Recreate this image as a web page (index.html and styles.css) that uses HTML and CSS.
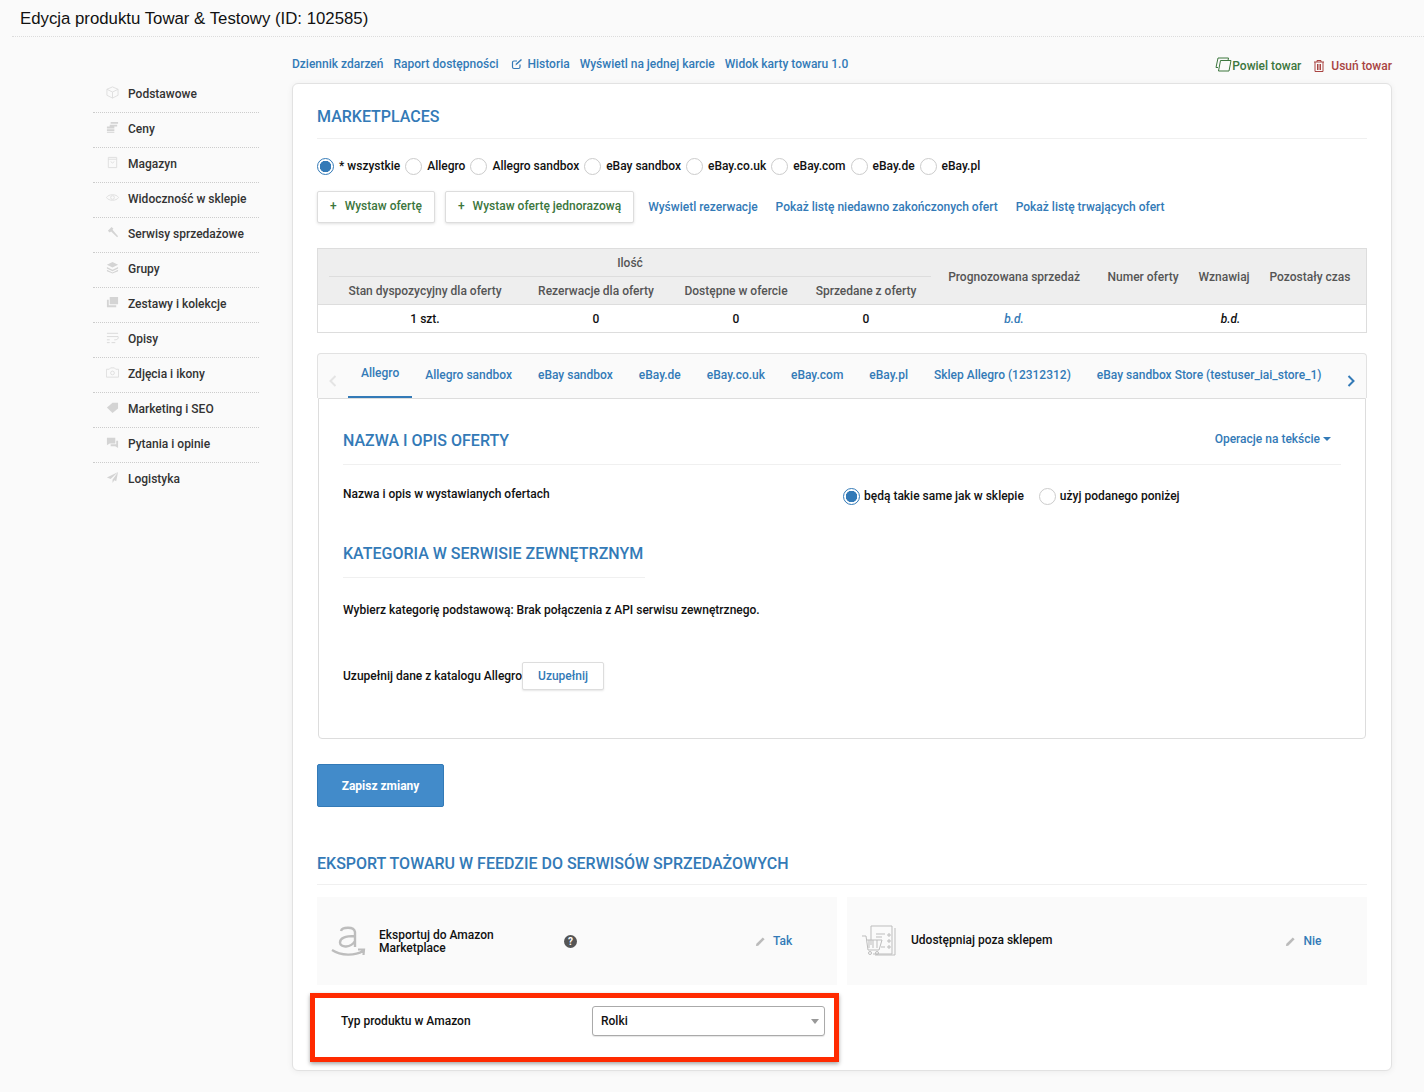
FILE: index.html
```html
<!DOCTYPE html>
<html lang="pl">
<head>
    <meta charset="UTF-8">
    <title>Edycja produktu</title>
    <link rel="stylesheet" href="styles.css">
</head>
<body>
    <h1 class="page-title">Edycja produktu Towar &amp; Testowy (ID: 102585)</h1>

    <div class="layout">
        <ul class="side-menu">
            <li><svg class="side-icon" viewBox="0 0 14 14"><path d="M7 1 13 3.500V10L7 13 1 10V3.500ZM1 3.500 7 6.500 13 3.500M7 6.500V13" fill="none" stroke="#ddd"/></svg>Podstawowe</li>
            <li><svg class="side-icon" viewBox="0 0 14 14"><path d="M5 1h8v2H5ZM4 4h8v2H4ZM1 6h8v2H1ZM1 9h8v2H1ZM1 12h8v1H1Z" fill="#d4d4d4"/></svg>Ceny</li>
            <li><svg class="side-icon" viewBox="0 0 14 14"><path d="M2.500 1.500h9v11h-9ZM2.500 3.500h9M5 6l2 1.500L9 6" fill="none" stroke="#ddd"/></svg>Magazyn</li>
            <li><svg class="side-icon" viewBox="0 0 14 14"><path d="M0.500 7C3 3 11 3 13.500 7 11 11 3 11 0.500 7Z" fill="none" stroke="#ddd"/><circle cx="7" cy="7" r="2" fill="none" stroke="#ddd"/></svg>Widoczność w sklepie</li>
            <li><svg class="side-icon" viewBox="0 0 14 14"><path d="M2 5 6 1l2 2-1 1 6 7-1 1-6.500-6L4 7Z" fill="#d4d4d4"/></svg>Serwisy sprzedażowe</li>
            <li><svg class="side-icon" viewBox="0 0 14 14"><path d="M7 1 13 4 7 7 1 4ZM1 6.500 7 9.500 13 6.500V8L7 11 1 8ZM1 9.500 7 12.500 13 9.500V11L7 13.500 1 11Z" fill="#d4d4d4"/></svg>Grupy</li>
            <li><svg class="side-icon" viewBox="0 0 14 14"><path d="M4 1h9v8H4ZM1 4h2v6h8v2H1Z" fill="#d4d4d4"/></svg>Zestawy i kolekcje</li>
            <li><svg class="side-icon" viewBox="0 0 14 14"><path d="M1 2.500h12M1 6h12c1 3-2 3.500-4 3.500M1 9.500h3M1 12.500h3M6 12.500h4" fill="none" stroke="#d8d8d8"/></svg>Opisy</li>
            <li><svg class="side-icon" viewBox="0 0 14 14"><path d="M.500 3.500h3L5 2h4l1.500 1.500h3v8.500H.500Z" fill="none" stroke="#ddd"/><circle cx="7" cy="7.500" r="2" fill="none" stroke="#ddd"/></svg>Zdjęcia i ikony</li>
            <li><svg class="side-icon" viewBox="0 0 14 14"><path d="M1 7 7 2h6v6l-6 5Z" fill="#d4d4d4"/></svg>Marketing i SEO</li>
            <li><svg class="side-icon" viewBox="0 0 14 14"><path d="M1 2h9v6H4L1 10ZM11 5h2v8l-3-2H5V9h6Z" fill="#d4d4d4"/></svg>Pytania i opinie</li>
            <li><svg class="side-icon" viewBox="0 0 14 14"><path d="M13 1 1 7l4 1.500L13 1 7 9.500V13l2-3 2 1Z" fill="#d4d4d4"/></svg>Logistyka</li>
        </ul>

        <main class="main">
            <div class="top-links">
                <a>Dziennik zdarzeń</a>
                <a>Raport dostępności</a>
                <a class="history"><svg class="history-icon" viewBox="0 0 12 12"><path d="M9 6.500V9a1.500 1.500 0 0 1-1.500 1.500H3A1.500 1.500 0 0 1 1.500 9V4.500A1.500 1.500 0 0 1 3 3H6" fill="none" stroke="#337ab7" stroke-width="1.200"/><path d="M4.500 7.500 5 5.500 10 1l1 1-5 4.500Z" fill="#337ab7"/></svg>Historia</a>
                <a>Wyświetl na jednej karcie</a>
                <a>Widok karty towaru 1.0</a>
                <span class="top-actions">
                    <a class="copy-link"><svg class="copy-icon" viewBox="0 0 17 15"><path d="M5.500 3.500H16L14 14H3.500Z" fill="none" stroke="#3c763d"/><path d="M3 10.500H1L3 1H13.500L13 3.500" fill="none" stroke="#3c763d"/></svg>Powiel towar</a>
                    <a class="delete-link"><svg class="trash-icon" viewBox="0 0 12 14"><path d="M1 3h10M4 3V1.500h4V3M2 3v9.500h8V3M4.500 5v6M6 5v6M7.500 5v6" fill="none" stroke="#a94442"/></svg>Usuń towar</a>
                </span>
            </div>

            <section class="card">
                <h2 class="section-title">MARKETPLACES</h2>

                <div class="radio-row">
                    <label class="radio-item"><span class="radio checked"></span>* wszystkie</label>
                    <label class="radio-item"><span class="radio"></span>Allegro</label>
                    <label class="radio-item"><span class="radio"></span>Allegro sandbox</label>
                    <label class="radio-item"><span class="radio"></span>eBay sandbox</label>
                    <label class="radio-item"><span class="radio"></span>eBay.co.uk</label>
                    <label class="radio-item"><span class="radio"></span>eBay.com</label>
                    <label class="radio-item"><span class="radio"></span>eBay.de</label>
                    <label class="radio-item"><span class="radio"></span>eBay.pl</label>
                </div>

                <div class="offer-actions">
                    <button class="btn-add"><span class="plus">+</span>Wystaw ofertę</button>
                    <button class="btn-add"><span class="plus">+</span>Wystaw ofertę jednorazową</button>
                    <a class="offer-link first">Wyświetl rezerwacje</a>
                    <a class="offer-link">Pokaż listę niedawno zakończonych ofert</a>
                    <a class="offer-link">Pokaż listę trwających ofert</a>
                </div>

                <table class="stock-table">
                    <colgroup>
                        <col class="c-pad-l"><col class="c-stan"><col class="c-rez"><col class="c-dost"><col class="c-sprz">
                        <col class="c-prog"><col class="c-num"><col class="c-wzn"><col class="c-poz"><col class="c-pad-r">
                    </colgroup>
                    <thead>
                        <tr class="head-top">
                            <th></th>
                            <th colspan="4" class="group-head">Ilość</th>
                            <th rowspan="2">Prognozowana sprzedaż</th>
                            <th rowspan="2">Numer oferty</th>
                            <th rowspan="2">Wznawiaj</th>
                            <th rowspan="2">Pozostały czas</th>
                            <th rowspan="2"></th>
                        </tr>
                        <tr class="head-sub">
                            <th></th>
                            <th>Stan dyspozycyjny dla oferty</th>
                            <th>Rezerwacje dla oferty</th>
                            <th>Dostępne w ofercie</th>
                            <th>Sprzedane z oferty</th>
                        </tr>
                    </thead>
                    <tbody>
                        <tr>
                            <td></td>
                            <td>1 szt.</td>
                            <td>0</td>
                            <td>0</td>
                            <td>0</td>
                            <td class="na-link">b.d.</td>
                            <td colspan="3" class="na">b.d.</td>
                            <td></td>
                        </tr>
                    </tbody>
                </table>

                <div class="tabs">
                    <svg class="tab-arrow left" viewBox="0 0 8 12"><path d="M6.500 1 1.500 6l5 5" fill="none" stroke="#e4e4e4" stroke-width="2"/></svg>
                    <a class="tab active">Allegro</a>
                    <a class="tab">Allegro sandbox</a>
                    <a class="tab">eBay sandbox</a>
                    <a class="tab">eBay.de</a>
                    <a class="tab">eBay.co.uk</a>
                    <a class="tab">eBay.com</a>
                    <a class="tab">eBay.pl</a>
                    <a class="tab">Sklep Allegro (12312312)</a>
                    <a class="tab">eBay sandbox Store (testuser_iai_store_1)</a>
                    <svg class="tab-arrow right" viewBox="0 0 8 12"><path d="M1.500 1l5 5-5 5" fill="none" stroke="#337ab7" stroke-width="2"/></svg>
                </div>

                <div class="tab-panel">
                    <div class="panel-head">
                        <h3 class="section-title small">NAZWA I OPIS OFERTY</h3>
                        <a class="text-ops">Operacje na tekście<span class="caret"></span></a>
                    </div>

                    <div class="name-row">
                        <span class="name-label">Nazwa i opis w wystawianych ofertach</span>
                        <div class="name-options">
                            <label class="radio-item"><span class="radio checked"></span>będą takie same jak w sklepie</label>
                            <label class="radio-item"><span class="radio"></span>użyj podanego poniżej</label>
                        </div>
                    </div>

                    <h3 class="section-title small category">KATEGORIA W SERWISIE ZEWNĘTRZNYM</h3>

                    <p class="category-text">Wybierz kategorię podstawową: Brak połączenia z API serwisu zewnętrznego.</p>

                    <div class="catalog-row">
                        <span>Uzupełnij dane z katalogu Allegro</span>
                        <button class="btn-fill">Uzupełnij</button>
                    </div>
                </div>

                <button class="btn-save">Zapisz zmiany</button>

                <h2 class="section-title export">EKSPORT TOWARU W FEEDZIE DO SERWISÓW SPRZEDAŻOWYCH</h2>

                <div class="tiles">
                    <div class="tile">
                        <svg class="amazon-logo" viewBox="0 0 36 32"><path d="M10 6C11 2 23 1 24 7V22M24 11C14 11 9 13 9 17.500 9 23 20 23 24 16" fill="none" stroke="#bdbdbd" stroke-width="2.400"/><path d="M1 25C10 31 24 31 32 26M27 24.500 33 24.500 32.500 30" fill="none" stroke="#bdbdbd" stroke-width="2.200"/></svg>
                        <span class="tile-text amazon-text">Eksportuj do Amazon Marketplace</span>
                        <span class="help">?</span>
                        <span class="tile-value tak"><svg class="pencil" viewBox="0 0 12 12"><path d="M1 11 1.500 8.500 8.500 1.500 10.500 3.500 3.500 10.500Z" fill="#bbb"/></svg><a>Tak</a></span>
                    </div>
                    <div class="tile">
                        <svg class="share-logo" viewBox="0 0 38 32"><g fill="none" stroke="#bdbdbd"><path d="M10 20V1H31V29H12M34 3V30H14"/><path d="M15 9H24M15 12H21M27 9h2v2h-2ZM27 15h2v2h-2ZM27 21h2v2h-2ZM20 22h4"/><path d="M1 11H5L7 25H18L21 15H6M8 15V23M12 15V23M16 15V23"/><circle cx="9" cy="28" r="1.500"/><circle cx="16" cy="28" r="1.500"/></g></svg>
                        <span class="tile-text share-text">Udostępniaj poza sklepem</span>
                        <span class="tile-value nie"><svg class="pencil" viewBox="0 0 12 12"><path d="M1 11 1.500 8.500 8.500 1.500 10.500 3.500 3.500 10.500Z" fill="#bbb"/></svg><a>Nie</a></span>
                    </div>
                </div>

                <div class="amazon-type">
                    <span class="type-label">Typ produktu w Amazon</span>
                    <div class="select-box">Rolki<span class="select-arrow"></span></div>
                    <div class="red-frame"></div>
                </div>
            </section>
        </main>
    </div>
</body>
</html>
```

FILE: styles.css
```css
* {
    box-sizing: border-box;
}
body {
    margin: 0;
    height: 1092px;
    overflow: hidden;
    background: #fafafa;
    font-family: Roboto, "Liberation Sans", sans-serif;
    font-size: 12px;
    font-weight: 500;
    color: #111;
}
a {
    color: #337ab7;
    text-decoration: none;
}
.page-title {
    margin: 0 0 0 12px;
    padding: 0 0 0 8px;
    height: 37px;
    line-height: 37px;
    font-family: "Liberation Sans", Arial, sans-serif;
    font-size: 16.800px;
    font-weight: 400;
    color: #111;
    border-bottom: 1px dotted #dcdcdc;
}
.layout {
    display: flex;
    padding-left: 93px;
}

/* left menu */
.side-menu {
    list-style: none;
    margin: 41px 33px 0 0;
    padding: 0;
    width: 166px;
    flex-shrink: 0;
}
.side-menu li {
    display: flex;
    align-items: center;
    height: 35px;
    padding: 0 0 2px 13px;
    color: #333;
    border-bottom: 1px dotted #ccc;
}
.side-menu li:last-child {
    border-bottom-color: transparent;
}
.side-icon {
    width: 13px;
    height: 13px;
    margin-right: 9px;
    margin-top: -3px;
    flex-shrink: 0;
}

/* links above card */
.main {
    width: 1100px;
}
.top-links {
    display: flex;
    align-items: center;
    gap: 10px;
    height: 46px;
    padding-top: 7px;
}
.history {
    display: flex;
    align-items: center;
    margin-left: 3px;
}
.history-icon {
    width: 12px;
    height: 12px;
    margin-right: 4px;
}
.top-actions {
    display: flex;
    align-items: center;
    margin-left: auto;
    gap: 12px;
    padding-top: 4px;
}
.copy-link {
    display: flex;
    align-items: center;
    color: #3c763d;
}
.delete-link {
    display: flex;
    align-items: center;
    color: #a94442;
}
.copy-icon {
    width: 17px;
    height: 15px;
    margin-top: -2px;
}
.trash-icon {
    width: 12px;
    height: 14px;
    margin-right: 6px;
}

/* card */
.card {
    height: 988px;
    padding: 0 24px;
    background: #fff;
    border: 1px solid #e2e2e2;
    border-radius: 6px;
    box-shadow: 0 1px 6px rgba(0, 0, 0, 0.06);
}
.section-title {
    margin: 0;
    height: 55px;
    line-height: 66px;
    font-size: 16px;
    font-weight: 500;
    color: #337ab7;
    border-bottom: 1px solid #f0f0f0;
}
.section-title.small {
    height: auto;
    line-height: 20px;
    border-bottom: none;
}
.radio-row {
    display: flex;
    align-items: center;
    height: 18px;
    margin-top: 18px;
}
.radio-item {
    display: flex;
    align-items: center;
    margin-right: 5px;
    color: #111;
}
.radio {
    display: inline-block;
    width: 17px;
    height: 17px;
    margin-right: 5px;
    background: #fff;
    border: 1px solid #ccc;
    border-radius: 50%;
}
.radio.checked {
    border-color: #337ab7;
    background: radial-gradient(circle, #337ab7 0, #337ab7 5.500px, #fff 6px);
}
.offer-actions {
    display: flex;
    align-items: center;
    margin-top: 16px;
    gap: 10px;
}
.btn-add {
    height: 32px;
    padding: 0 12px 2px;
    font: inherit;
    color: #3c763d;
    background: #fff;
    border: 1px solid #ddd;
    border-radius: 2px;
    box-shadow: 0 1px 3px rgba(0, 0, 0, 0.12);
}
.plus {
    margin-right: 8px;
}
.offer-link {
    margin-left: 8px;
}
.offer-link.first {
    margin-left: 4px;
}

/* stock table */
.stock-table {
    width: 1050px;
    margin-top: 25px;
    table-layout: fixed;
    border-collapse: separate;
    border-spacing: 0;
    border: 1px solid #ddd;
}
.c-pad-l { width: 11px; }
.c-stan { width: 192px; }
.c-rez { width: 150px; }
.c-dost { width: 130px; }
.c-sprz { width: 130px; }
.c-prog { width: 166px; }
.c-num { width: 92px; }
.c-wzn { width: 70px; }
.c-poz { width: 102px; }
.c-pad-r { width: 5px; }
.stock-table th {
    padding: 0;
    font-weight: 500;
    color: #555;
    text-align: center;
    background: #eee;
}
.head-top th {
    height: 28px;
}
.head-sub th {
    height: 27px;
}
.group-head {
    border-bottom: 1px solid #ddd;
}
.stock-table td {
    height: 28px;
    padding: 0;
    text-align: center;
    border-top: 1px solid #ddd;
}
.na-link {
    font-style: italic;
    color: #337ab7;
}
.stock-table td.na {
    padding-left: 3px;
    font-style: italic;
}

/* tabs */
.tabs {
    position: relative;
    display: flex;
    height: 45px;
    margin-top: 20px;
    padding-left: 30px;
    background: #fafafa;
    border: 1px solid #e2e2e2;
    border-bottom: none;
    border-radius: 4px 4px 0 0;
}
.tab {
    height: 44px;
    padding: 0 13px;
    line-height: 43px;
    white-space: nowrap;
}
.tab.active {
    line-height: 38px;
    border-bottom: 2px solid #337ab7;
}
.tab-arrow {
    position: absolute;
    width: 8px;
    height: 12px;
}
.tab-arrow.left {
    left: 11px;
    top: 21px;
}
.tab-arrow.right {
    right: 11px;
    top: 21px;
}
.tab-panel {
    height: 341px;
    margin-left: 1px;
    margin-right: 1px;
    padding: 0 24px;
    background: #fff;
    border: 1px solid #ddd;
    border-radius: 0 0 4px 4px;
}
.panel-head {
    display: flex;
    justify-content: space-between;
    align-items: center;
    height: 66px;
    padding-top: 18px;
    border-bottom: 1px solid #f0f0f0;
}
.text-ops {
    margin-right: 10px;
    margin-top: -4px;
}
.caret {
    display: inline-block;
    margin-left: 3px;
    vertical-align: 2px;
    border-top: 4px solid #337ab7;
    border-left: 4px solid transparent;
    border-right: 4px solid transparent;
}
.name-row {
    display: flex;
    height: 66px;
    padding-top: 22px;
}
.name-label {
    width: 500px;
    line-height: 14px;
}
.name-options {
    display: flex;
    height: 18px;
}
.name-options .radio {
    margin-right: 4px;
}
.name-options .radio-item {
    margin-right: 15px;
}
.section-title.category {
    width: 302px;
    height: 34px;
    margin-top: 13px;
    border-bottom: 1px solid #f0f0f0;
    white-space: nowrap;
}
.category-text {
    margin: 25px 0 0;
    line-height: 14px;
}
.catalog-row {
    display: flex;
    align-items: center;
    margin-top: 45px;
}
.btn-fill {
    width: 82px;
    height: 28px;
    font: inherit;
    color: #337ab7;
    background: #fff;
    border: 1px solid #ddd;
    border-radius: 2px;
    box-shadow: 0 1px 2px rgba(0, 0, 0, 0.1);
}
.btn-save {
    display: block;
    width: 127px;
    height: 43px;
    margin-top: 25px;
    font: inherit;
    font-weight: 700;
    color: #fff;
    background: #428bca;
    border: 1px solid #337ab7;
    border-radius: 2px;
}
.section-title.export {
    height: 78px;
    line-height: 113px;
}

/* export tiles */
.tiles {
    display: flex;
    gap: 10px;
    margin-top: 12px;
}
.tile {
    display: flex;
    align-items: center;
    width: 520px;
    height: 88px;
    padding-left: 14px;
    background: #fafafa;
}
.amazon-logo {
    width: 36px;
    height: 32px;
    margin-right: 12px;
}
.share-logo {
    width: 38px;
    height: 32px;
    margin-right: 12px;
}
.tile-text {
    line-height: 13px;
}
.amazon-text {
    width: 150px;
    margin-top: 2px;
}
.share-text {
    margin-top: -2px;
}
.help {
    width: 13px;
    height: 13px;
    margin-left: 35px;
    line-height: 13px;
    font-size: 10px;
    font-weight: 700;
    text-align: center;
    color: #fff;
    background: #555;
    border-radius: 50%;
}
.tile-value {
    display: flex;
    align-items: center;
}
.tak {
    margin-left: 178px;
}
.nie {
    margin-left: 233px;
}
.pencil {
    width: 11px;
    height: 11px;
    margin-right: 7px;
}

/* highlighted row */
.amazon-type {
    position: relative;
    display: flex;
    align-items: center;
    height: 30px;
    margin-top: 21px;
    padding-left: 24px;
}
.type-label {
    width: 251px;
    margin-top: -1px;
}
.select-box {
    position: relative;
    width: 233px;
    height: 30px;
    padding-left: 8px;
    line-height: 28px;
    color: #111;
    background: #fff;
    border: 1px solid #aaa;
    border-radius: 3px;
    box-shadow: 0 1px 1px rgba(0, 0, 0, 0.1);
}
.select-arrow {
    position: absolute;
    right: 5px;
    top: 12px;
    border-top: 5px solid #999;
    border-left: 4px solid transparent;
    border-right: 4px solid transparent;
}
.red-frame {
    position: absolute;
    left: -7px;
    top: -13px;
    width: 529px;
    height: 69px;
    border: 5px solid #ff2a00;
    box-shadow: 0 2px 4px rgba(0, 0, 0, 0.35);
}
```
